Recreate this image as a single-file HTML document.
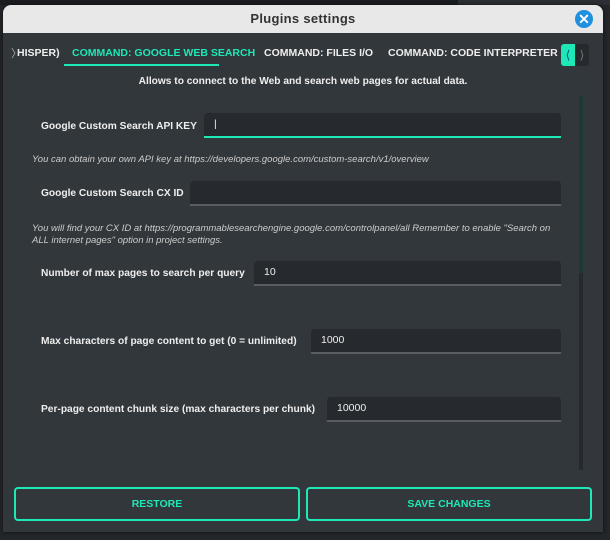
<!DOCTYPE html>
<html><head><style>
*{margin:0;padding:0;box-sizing:border-box}
body{width:610px;height:540px;background:#23262a;position:relative;overflow:hidden;font-family:"Liberation Sans",sans-serif}
.abs{position:absolute}
.dlg{left:3px;top:5px;width:600px;height:527px;background:#32373b;border-radius:8px 8px 0 0;overflow:hidden;box-shadow:0 0 4px #111}
.title{left:0;top:0;width:600px;height:28px;background:#e8e8e8;text-align:center;font-size:13px;font-weight:bold;line-height:28px;color:#333;letter-spacing:0.3px}
.close{left:572px;top:5px;width:18px;height:18px;border-radius:50%;background:#1e90dd;color:#fff;font-size:14px;line-height:18px;text-align:center;font-weight:bold}
.tab{top:42px;font-size:10.5px;font-weight:bold;color:#eee;white-space:nowrap}
.lbl{font-size:10.2px;font-weight:bold;color:#eee;white-space:nowrap}
.help{font-size:9.5px;font-style:italic;color:#ccc;white-space:nowrap}
.inp{background:#26292d;border-radius:4px 4px 0 0;border-bottom:2px solid #5a5e63;height:25px;font-size:10.5px;color:#eee;padding-left:10px;line-height:23px}
.btn{top:482px;height:34px;border:2px solid #1de9b6;border-radius:4px;color:#1de9b6;font-size:10.5px;font-weight:bold;text-align:center;line-height:30px}
</style></head><body>
<div class="abs" style="left:0;top:0;width:610px;height:5px;background:#1b1d20"></div>
<div class="abs" style="left:458px;top:0;width:152px;height:5px;background:#2c3034"></div>
<div class="abs dlg">
 <div class="abs" style="left:8px;top:40px;color:#aaa;font-size:11px">〉</div>
 <div class="abs title">Plugins settings</div>
 <div class="abs close">✕</div>
 <div class="abs tab" style="left:14px">HISPER)</div>
 <div class="abs tab" style="left:69px;color:#1de9b6">COMMAND: GOOGLE WEB SEARCH</div>
 <div class="abs" style="left:61px;top:59px;width:155px;height:2px;background:#1de9b6"></div>
 <div class="abs tab" style="left:261px">COMMAND: FILES I/O</div>
 <div class="abs tab" style="left:385px">COMMAND: CODE INTERPRETER</div>
 <div class="abs" style="left:558px;top:39px;width:14px;height:22px;background:#1de9b6;border-radius:3px 0 0 3px;color:#148;font-size:12px;text-align:center;line-height:22px">⟨</div>
 <div class="abs" style="left:572px;top:39px;width:14px;height:22px;background:#26292d;border-radius:0 3px 3px 0;color:#777;font-size:12px;text-align:center;line-height:22px">⟩</div>
 <div class="abs lbl" style="left:0;width:600px;text-align:center;top:71px">Allows to connect to the Web and search web pages for actual data.</div>

 <div class="abs" style="left:576px;top:91px;width:4px;height:374px;background:#26292d"></div>
 <div class="abs" style="left:576px;top:91px;width:4px;height:177px;background:#1f3a36"></div>

 <div class="abs lbl" style="left:38px;top:116px">Google Custom Search API KEY</div>
 <div class="abs inp" style="left:201px;top:108px;width:357px;border-bottom-color:#1de9b6">|</div>
 <div class="abs help" style="left:29px;top:149px">You can obtain your own API key at https://developers.google.com/custom-search/v1/overview</div>

 <div class="abs lbl" style="left:38px;top:183px">Google Custom Search CX ID</div>
 <div class="abs inp" style="left:187px;top:176px;width:371px"></div>
 <div class="abs help" style="left:29px;top:218px">You will find your CX ID at https://programmablesearchengine.google.com/controlpanel/all Remember to enable "Search on</div>
 <div class="abs help" style="left:29px;top:230px">ALL internet pages" option in project settings.</div>

 <div class="abs lbl" style="left:38px;top:263px">Number of max pages to search per query</div>
 <div class="abs inp" style="left:251px;top:256px;width:307px">10</div>

 <div class="abs lbl" style="left:38px;top:331px">Max characters of page content to get (0 = unlimited)</div>
 <div class="abs inp" style="left:308px;top:324px;width:250px">1000</div>

 <div class="abs lbl" style="left:38px;top:399px">Per-page content chunk size (max characters per chunk)</div>
 <div class="abs inp" style="left:324px;top:392px;width:234px">10000</div>

 <div class="abs btn" style="left:11px;width:286px">RESTORE</div>
 <div class="abs btn" style="left:303px;width:286px">SAVE CHANGES</div>
</div>
</body></html>
